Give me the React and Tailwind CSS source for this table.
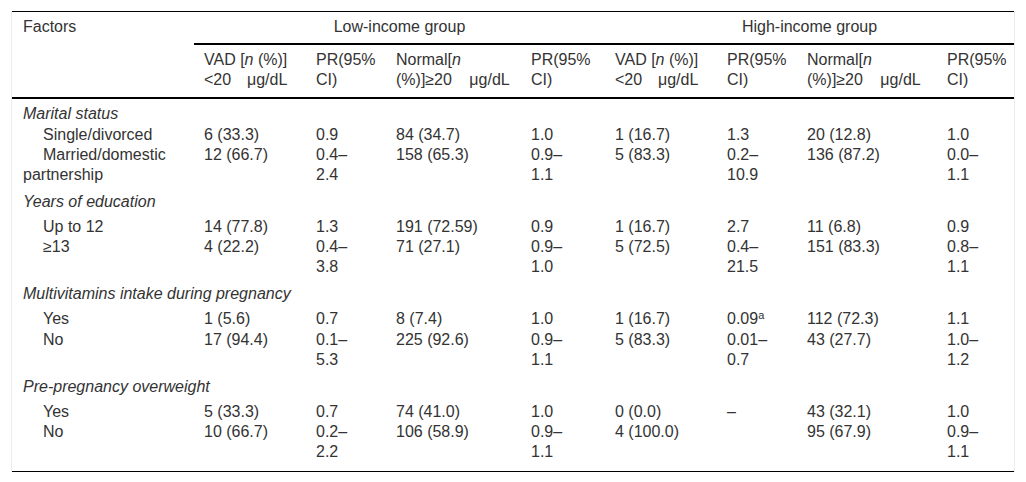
import React from 'react';

const rows = [
  { cat: 'Marital status', first: true },
  { label: 'Single/divorced', cells: ['6 (33.3)', '0.9', '84 (34.7)', '1.0', '1 (16.7)', '1.3', '20 (12.8)', '1.0'] },
  { label: 'Married/domestic partnership', cells: ['12 (66.7)', ['0.4–', '2.4'], '158 (65.3)', ['0.9–', '1.1'], '5 (83.3)', ['0.2–', '10.9'], '136 (87.2)', ['0.0–', '1.1']] },
  { cat: 'Years of education' },
  { label: 'Up to 12', cells: ['14 (77.8)', '1.3', '191 (72.59)', '0.9', '1 (16.7)', '2.7', '11 (6.8)', '0.9'] },
  { label: '≥13', cells: ['4 (22.2)', ['0.4–', '3.8'], '71 (27.1)', ['0.9–', '1.0'], '5 (72.5)', ['0.4–', '21.5'], '151 (83.3)', ['0.8–', '1.1']] },
  { cat: 'Multivitamins intake during pregnancy' },
  { label: 'Yes', cells: ['1 (5.6)', '0.7', '8 (7.4)', '1.0', '1 (16.7)', 'SUP', '112 (72.3)', '1.1'] },
  { label: 'No', cells: ['17 (94.4)', ['0.1–', '5.3'], '225 (92.6)', ['0.9–', '1.1'], '5 (83.3)', ['0.01–', '0.7'], '43 (27.7)', ['1.0–', '1.2']] },
  { cat: 'Pre-pregnancy overweight' },
  { label: 'Yes', cells: ['5 (33.3)', '0.7', '74 (41.0)', '1.0', '0 (0.0)', '–', '43 (32.1)', '1.0'] },
  { label: 'No', cells: ['10 (66.7)', ['0.2–', '2.2'], '106 (58.9)', ['0.9–', '1.1'], '4 (100.0)', '', '95 (67.9)', ['0.9–', '1.1']], last: true },
];

function Cell({ value }) {
  if (value === 'SUP') {
    return (
      <>
        0.09<span className="text-[11px] relative -top-[5px]">a</span>
      </>
    );
  }
  if (Array.isArray(value)) {
    return (
      <>
        {value[0]}
        <br />
        {value[1]}
      </>
    );
  }
  return value;
}

function VadHead() {
  return (
    <div className="w-fit">
      <div>
        VAD [<i>n</i> (%)]
      </div>
      <div className="flex justify-between">
        <span>&lt;20</span>
        <span>μg/dL</span>
      </div>
    </div>
  );
}

function NormalHead() {
  return (
    <>
      Normal[<i>n</i>
      <br />
      (%)]≥20 <span className="inline-block w-[13px]" />μg/dL
    </>
  );
}

export default function App() {
  const th = 'text-left font-normal align-top pl-[10px] pt-[5px] pb-[7px] border-b-2 border-black';
  return (
    <div className="bg-white w-[1026px] h-[482px] pt-[11px] text-[#333] text-[16px] leading-[20px]" style={{ fontFamily: '"Liberation Sans", Arial, sans-serif' }}>
      <div className="ml-[11px] w-[1004px] border-x border-[#ececec]">
        <table className="table-fixed w-[1002px] border-collapse border-t border-b border-black">
          <colgroup>
            <col className="w-[182px]" />
            <col className="w-[112px]" />
            <col className="w-[80px]" />
            <col className="w-[135px]" />
            <col className="w-[84px]" />
            <col className="w-[112px]" />
            <col className="w-[80px]" />
            <col className="w-[140px]" />
            <col className="w-[77px]" />
          </colgroup>
          <thead>
            <tr>
              <th rowSpan={2} className="text-left font-normal align-top pl-[11px] pt-[5px] border-b-2 border-black">Factors</th>
              <th colSpan={4} className="font-normal text-center pt-[5px] pb-[6px] border-b-2 border-black">Low-income group</th>
              <th colSpan={4} className="font-normal text-center pt-[5px] pb-[6px] border-b-2 border-black">High-income group</th>
            </tr>
            <tr>
              <th className={th}><VadHead /></th>
              <th className={th}>PR(95%<br />CI)</th>
              <th className={th}><NormalHead /></th>
              <th className={th}>PR(95%<br />CI)</th>
              <th className={th}><VadHead /></th>
              <th className={th}>PR(95%<br />CI)</th>
              <th className={th}><NormalHead /></th>
              <th className={th}>PR(95%<br />CI)</th>
            </tr>
          </thead>
          <tbody>
            {rows.map((r, i) =>
              r.cat ? (
                <tr key={i}>
                  <td colSpan={9} className={`pl-[11px] italic whitespace-nowrap ${r.first ? 'pt-[5px] pb-[1px]' : 'pt-[7px] pb-[5px]'}`}>
                    {r.cat}
                  </td>
                </tr>
              ) : (
                <tr key={i} className="align-top">
                  <td className={`pl-[11px] indent-[20px] ${r.last ? 'pb-[9px]' : ''}`}>{r.label}</td>
                  {r.cells.map((c, j) => (
                    <td key={j} className={`pl-[10px] whitespace-nowrap ${r.last ? 'pb-[9px]' : ''}`}>
                      <Cell value={c} />
                    </td>
                  ))}
                </tr>
              )
            )}
          </tbody>
        </table>
      </div>
    </div>
  );
}
